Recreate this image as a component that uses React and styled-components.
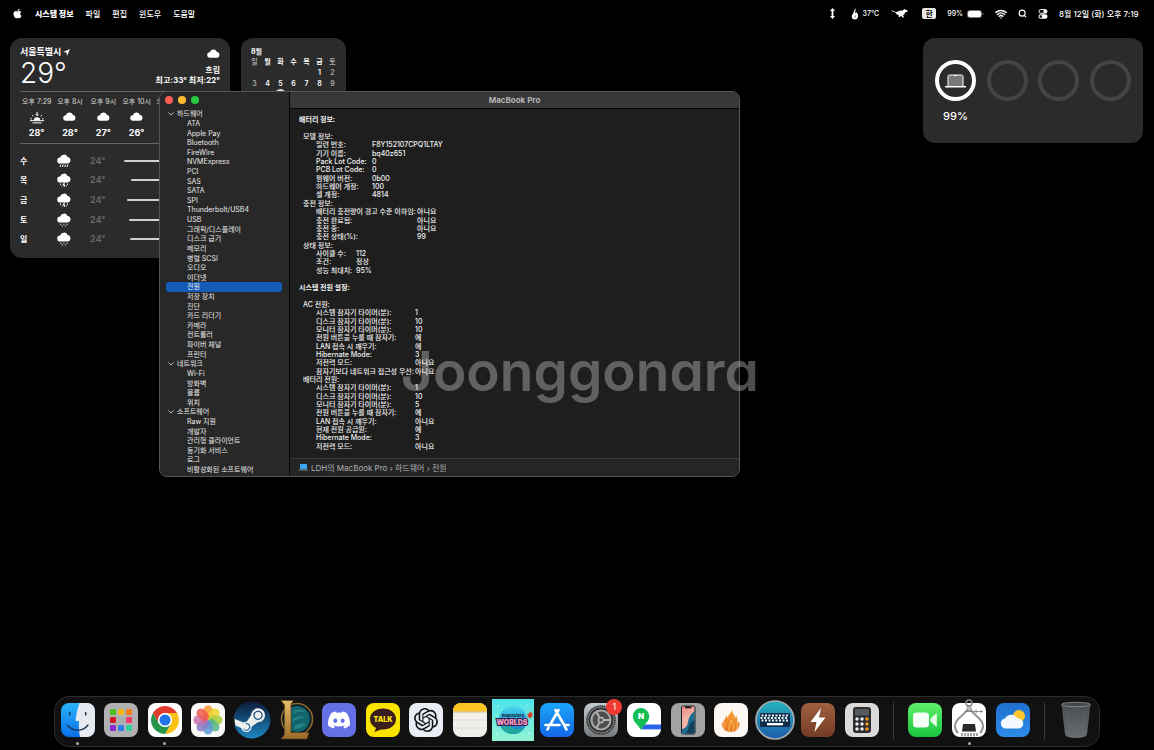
import React, { useState } from "react";
import styled, { createGlobalStyle } from "styled-components";
import { FaApple, FaDiscord, FaSteam } from "react-icons/fa";
import { SiOpenai } from "react-icons/si";
import { Search, Wifi } from "lucide-react";

const GlobalStyle = createGlobalStyle`
  * {
    box-sizing: border-box;
  }

  body {
    margin: 0;
    background: #000;
    color: #fff;
    font-family: Inter, "Noto Sans CJK KR", sans-serif;
    font-size: 8px;
    line-height: 10px;
  }

  button {
    font: inherit;
    color: inherit;
    background: none;
    border: 0;
    margin: 0;
    padding: 0;
    text-align: left;
    white-space: nowrap;
  }

  svg {
    display: block;
    flex: none;
  }
`;

const Desktop = styled.div`
  position: relative;
  min-height: 100vh;
  display: flex;
  flex-direction: column;
  overflow: hidden;
`;

/* menu bar */

const MenuBar = styled.header`
  height: 27px;
  padding: 0 11px 0 12px;
  display: flex;
  align-items: center;
  justify-content: space-between;
`;

const MenuGroup = styled.div`
  display: flex;
  align-items: center;
  gap: ${props => props.gap || "12px"};
  font-weight: 500;
`;

const MenuButton = styled.button`
  display: flex;
  align-items: center;
  gap: 4px;
  padding: ${props => props.padding || "0"};
  font-weight: ${props => (props.$bold ? 800 : 500)};
`;

const Reading = styled(MenuButton)`
  font-size: 7px;
`;

const Clock = styled(MenuButton)`
  min-width: 84px;
`;

const InputSource = styled.button`
  width: 14px;
  height: 11px;
  border-radius: 2px;
  background: #e8e8e8;
  color: #000;
  text-align: center;
  font-weight: 700;
`;

/* widgets */

const Widgets = styled.main`
  display: flex;
  align-items: flex-start;
  gap: 11px;
  padding: 11px 11px 0 10px;
`;

const Widget = styled.section`
  width: ${props => props.width};
  height: ${props => props.height};
  padding: ${props => props.padding};
  margin-left: ${props => props.$push || "0"};
  border-radius: 12px;
  background: #2b2b2b;
`;

const WeatherTop = styled.div`
  display: flex;
  justify-content: space-between;
  height: 45px;
`;

const City = styled.div`
  display: flex;
  align-items: center;
  gap: 2px;
  margin-top: 2px;
  font-size: 9px;
  line-height: 8px;
  font-weight: 700;
`;

const Degrees = styled.div`
  font-size: 28px;
  line-height: 34px;
  font-weight: 300;
`;

const Condition = styled.div`
  display: flex;
  flex-direction: column;
  align-items: flex-end;
  font-weight: 700;

  svg {
    margin: 2px 0 4px;
  }
`;

const Hours = styled.div`
  display: grid;
  grid-template-columns: repeat(6, 1fr);
  height: 53px;
  padding-top: 5px;
  border: solid #666;
  border-width: 1px 0;
`;

const Hour = styled.div`
  display: flex;
  flex-direction: column;
  align-items: center;
  gap: 4px;
  font-size: 7px;
  color: #ddd;
  white-space: nowrap;

  strong {
    font-size: 9px;
    color: #fff;
  }
`;

const Days = styled.div`
  display: flex;
  flex-direction: column;
  height: 98px;
  margin-top: 7px;
`;

const Day = styled.div`
  flex: 1;
  display: grid;
  grid-template-columns: 37px 33px 34px 1fr;
  align-items: center;
  font-weight: 700;
`;

const Low = styled.span`
  font-size: 9px;
  font-weight: 600;
  color: #6b6b6b;
`;

const RangeBar = styled.span`
  height: 2px;
  border-radius: 1px;
  background: #d0d0d0;
`;

const MonthTable = styled.table`
  width: 100%;
  table-layout: fixed;
  border-collapse: collapse;
  font-size: 7px;
  line-height: 11px;
  text-align: center;

  caption {
    text-align: left;
    padding-left: 3px;
    line-height: 9px;
    font-weight: 700;
  }

  th,
  td {
    padding: 0;
    height: 11px;
    font-weight: 600;
  }

  th:first-child,
  th:last-child,
  td:first-child,
  td:last-child {
    color: #aaa;
  }
`;

const Today = styled.span`
  display: block;
  width: 11px;
  margin: 0 auto;
  border-radius: 50%;
  background: #ddd;
  color: #2b2b2b;
`;

const Rings = styled.div`
  display: flex;
  justify-content: space-between;
`;

const Ring = styled.div`
  width: 41px;
  height: 41px;
  display: flex;
  align-items: center;
  justify-content: center;
  border: 4px solid ${props => (props.$active ? "#fff" : "#444")};
  border-radius: 50%;
`;

const Charge = styled.div`
  width: 41px;
  margin-top: 7px;
  text-align: center;
  font-size: 11px;
  line-height: 16px;
  font-weight: 500;
`;

/* system report window, placed freely on the desktop */

const Window = styled.section`
  position: absolute;
  left: 159px;
  top: 91px;
  width: 581px;
  height: 386px;
  display: flex;
  border: 1px solid #555;
  border-radius: 8px;
  background: #1e1e1e;
  overflow: hidden;
`;

const Sidebar = styled.nav`
  width: 130px;
  padding: 4px 7px 0 6px;
  background: #282828;
  border-right: 1px solid #060606;
  overflow: hidden;
`;

const Lights = styled.div`
  display: flex;
  gap: 5px;
  padding: 0 0 5px;
  margin-left: -1px;
`;

const Light = styled.button`
  width: 8px;
  height: 8px;
  border-radius: 50%;
  background: ${props => props.color};
`;

const Tree = styled.div`
  display: grid;
  grid-template-rows: repeat(39, 1fr);
  height: 375px;
`;

const TreeItem = styled.button`
  display: flex;
  align-items: center;
  gap: 3px;
  min-height: 0;
  padding-left: ${props => (props.$head ? "2px" : "21px")};
  border-radius: 3px;
  font-size: 7px;
  line-height: 9px;
  color: #e8e8e8;
  background: ${props => (props.$selected ? "#145cb8" : "none")};
`;

const Content = styled.div`
  flex: 1;
  display: flex;
  flex-direction: column;
`;

const TitleBar = styled.h1`
  flex: none;
  margin: 0;
  background: #373737;
  border-bottom: 1px solid #050505;
  color: #b5b5b5;
  text-align: center;
  font-size: 8px;
  line-height: 16px;
  font-weight: 700;
`;

const Report = styled.div`
  flex: 1;
  min-height: 0;
  overflow: hidden;
  padding: 6px 9px 0;
  font-size: 7px;
  line-height: 8px;
  font-weight: 500;
  color: #f2f2f2;
`;

const ReportTitle = styled.h2`
  margin: 0 0 9px;
  font-size: 7px;
  line-height: 9px;
  font-weight: 700;
`;

const ReportBody = styled.div`
  display: flex;
  flex-direction: column;
  height: ${props => props.height};
  margin-bottom: 8px;
  padding-left: 4px;
`;

const Group = styled.dl`
  flex: ${props => props.$rows} 1 0;
  display: grid;
  grid-template-columns: 13px ${props => props.$keys} 1fr;
  grid-template-rows: repeat(${props => props.$rows}, 1fr);
  min-height: 0;
  margin: 0;
  white-space: nowrap;
`;

const GroupName = styled.dt`
  grid-column: 1 / -1;
  min-height: 0;
`;

const Key = styled.dt`
  grid-column: 2;
  min-height: 0;
`;

const Value = styled.dd`
  margin: 0;
  min-height: 0;
`;

const PathBar = styled.footer`
  flex: none;
  height: 18px;
  display: flex;
  align-items: center;
  gap: 3px;
  padding-left: 9px;
  border-top: 1px solid #3a3a3a;
  background: #252525;
  color: #b0b0b0;
`;

const Watermark = styled.div`
  position: absolute;
  left: 401px;
  top: 336px;
  font-size: 55px;
  line-height: 70px;
  font-weight: 600;
  font-feature-settings: "cv11";
  color: rgba(255, 255, 255, 0.3);
  pointer-events: none;
`;

/* dock */

const DockBar = styled.footer`
  display: flex;
  height: 51px;
  margin: auto 54px 3px;
  padding: 2px 1px 0;
  border: 1px solid #2c2c2c;
  border-radius: 15px;
  background: #111;
`;

const DockItem = styled.button`
  position: relative;
  flex: 1;
  min-width: 0;
  display: flex;
  flex-direction: column;
  align-items: center;
`;

const Dot = styled.span`
  width: 3px;
  height: 3px;
  margin-top: 1px;
  border-radius: 50%;
  background: #aaa;
`;

const Divider = styled.span`
  width: 20px;
  display: flex;
  justify-content: center;

  &::before {
    content: "";
    width: 1px;
    height: 38px;
    margin-top: 3px;
    background: #3a3a3a;
  }
`;

const Badge = styled.span`
  position: absolute;
  right: 0;
  top: 0;
  width: 16px;
  height: 16px;
  border-radius: 50%;
  background: #f03b30;
  text-align: center;
  font-size: 9px;
  line-height: 16px;
`;

const CLOUD = "M3.4 9.5a3 3 0 0 1-.3-6A4 4 0 0 1 10.6 3a3.3 3.3 0 0 1 .3 6.5z";

const Cloud = ({ size = 13 }) => (
  <svg width={size} height={size} viewBox="0 0 14 12" fill="#fff">
    <path d={CLOUD} />
  </svg>
);

const Rain = ({ kind }) => (
  <svg width="14" height="14" viewBox="0 0 14 14" fill="#fff" stroke="#fff">
    <path d={CLOUD} stroke="none" />
    {kind === "rain" && <path d="M4 10.5 3 13M6.3 10.5l-1 2.5M8.600 10.5l-1 2.5M10.900 10.5l-1 2.5" />}
    {kind === "storm" && (
      <path d="M3.5 10.5v1.5M10.5 10.5v1.5M7.5 9.5 6 12h2l-1 2M5 12.5v1M9.5 12.5v1" strokeWidth=".9" />
    )}
    {kind === "drizzle" && (
      <path d="M3.7 10.7v1M6.900 10.7v1M10.100 10.7v1M5.3 12.5v1M8.5 12.5v1" strokeWidth="1.1" />
    )}
  </svg>
);

const Sunset = () => (
  <svg width="14" height="13" viewBox="0 0 14 13" fill="none" stroke="#fff">
    <path d="M3.8 9.5a3.2 3.2 0 0 1 6.4 0z" fill="#fff" stroke="none" />
    <path d="M0 9.7h14M2.5 11.900h9M7 1v3.5M5.5 3 7 4.5 8.5 3M2.2 4.2l1.2 1.2M11.8 4.2l-1.2 1.2M.5 7.8H2M12 7.8h1.5" />
  </svg>
);

const Chevron = () => (
  <svg width="6" height="4" viewBox="0 0 6 4" fill="none" stroke="#bbb">
    <path d="M.5.5 3 3.2 5.5.5" />
  </svg>
);

const Laptop = () => (
  <svg width="21" height="14" viewBox="0 0 21 14">
    <path d="M3 12V2.5Q3 1 4.5 1h12Q18 1 18 2.5V12" fill="#777" stroke="#fff" />
    <path d="M9 1h3v1H9zM0 12h21v1q0 .5-1 .5H1q-1 0-1-.5z" fill="#fff" />
  </svg>
);

const MenuBattery = () => (
  <svg width="17" height="8" viewBox="0 0 17 8">
    <rect x=".5" y=".5" width="14" height="7" rx="2" fill="none" stroke="#777" />
    <rect x="1" y="1" width="13" height="6" rx="1.5" fill="#fff" />
    <path d="M15.5 2.7q1 .3 1 1.3t-1 1.3z" fill="#888" />
  </svg>
);

const ControlCenter = () => (
  <svg width="10" height="10" viewBox="0 0 10 10">
    <rect x="1" y=".6" width="8" height="3.6" rx="1.8" fill="none" stroke="#fff" />
    <circle cx="7.2" cy="2.4" r="1.8" fill="#fff" />
    <rect x=".5" y="5.3" width="9" height="4.5" rx="2.2" fill="#fff" />
    <circle cx="2.8" cy="7.5" r="1.3" fill="#000" />
  </svg>
);

const Flame = () => (
  <svg width="8" height="12" viewBox="0 0 8 12">
    <path d="M4.5 0C5.300 2.500 3.700 3.500 4.200 5c.5.500 1-.2 1-1C6.700 5.500 7.500 7 7 9c-.4 1.700-1.700 2.500-3.200 2.500S.8 10.500.7 8.700C.6 6.700 2.300 6 2.700 4 3 2.500 4.200 2 4.500 0z" fill="#fff" />
    <path d="M4.200 7.500v2" stroke="#555" strokeWidth=".8" />
  </svg>
);

const RunningCat = () => (
  <svg width="17" height="11" viewBox="0 0 17 11">
    <path d="M.5 2.500Q3 2.300 4.500 4q2 0 4-1.200l3-.3L13.500 1l.8.8 1.900.2.3 1.800-2.500.8-.5 1.700-1.500 1 1 2-1.200.4-1.600-1.900L8.800 9l-1.300-.2.3-1.600-2.300-1L5 5Q3 3.400.5 3.300z" fill="#fff" />
  </svg>
);

const UpDown = () => (
  <svg width="5" height="11" viewBox="0 0 5 11">
    <path d="M2.5 0 5 3H3.400v5H5L2.5 11 0 8h1.600V3H0z" fill="#fff" />
  </svg>
);

/* dock artwork, every tile sits in a 42 unit box */

const Art = ({ children, tile }) => (
  <svg width="42" height="42" viewBox="0 0 42 42">
    {tile && <rect x="4" y="4" width="34" height="34" rx="8" fill={tile} />}
    {children}
  </svg>
);

const Gradient = ({ id, from, to }) => (
  <linearGradient id={id} x1="0" y1="0" x2="0" y2="1">
    <stop stopColor={from} />
    <stop offset="1" stopColor={to} />
  </linearGradient>
);

const Finder = () => (
  <Art tile="url(#finder)">
    <Gradient id="finder" from="#29b4fb" to="#0a6fe8" />
    <path d="M22.5 4C20 11 19 17 18.6 22H22c-.4 6 0 11 1 16h7a8 8 0 0 0 8-8V12a8 8 0 0 0-8-8z" fill="#e6eaf0" />
    <path d="M12.7 13.5v2.500M28.7 13.5v2.500" stroke="#12304e" strokeWidth="1.4" strokeLinecap="round" />
    <path d="M10.5 26.5q4.5 4.7 10.5 4.7T31 26" fill="none" stroke="#17324d" strokeWidth="1.3" strokeLinecap="round" />
  </Art>
);

const PAD_COLORS = ["#4fc11c", "#f8b90f", "#f4801b", "#d01c28", "#a9adb0", "#f03a68", "#8a2bd0", "#2a80ea", "#2fd39a"];

const Launchpad = () => (
  <Art tile="#b1b1b3">
    {PAD_COLORS.map((color, i) => (
      <rect key={color} x={10 + (i % 3) * 8} y={10 + Math.floor(i / 3) * 8} width="6" height="6" rx="1.2" fill={color} />
    ))}
  </Art>
);

const Chrome = () => (
  <Art tile="#fff">
    <path d="M8.88 14a14 14 0 0 1 24.24 0H21a7 7 0 0 0-6.06 10.5z" fill="#e23b2e" />
    <path d="M33.12 14A14 14 0 0 1 21 35l6.06-10.5A7 7 0 0 0 21 14z" fill="#fbc116" />
    <path d="M21 35A14 14 0 0 1 8.88 14l6.06 10.5a7 7 0 0 0 12.12 0z" fill="#27964a" />
    <circle cx="21" cy="21" r="7" fill="#fff" />
    <circle cx="21" cy="21" r="5.5" fill="#1f74e8" />
  </Art>
);

const PETALS = ["#f7962a", "#f2d32c", "#a6cc3d", "#58b582", "#5b98d6", "#8b78c4", "#c76fb0", "#ee5a4d"];

const Photos = () => (
  <Art tile="#fafafa">
    {PETALS.map((color, i) => (
      <rect key={color} x="16.500" y="6.500" width="9" height="14" rx="4.500" fill={color} opacity=".85" transform={`rotate(${i * 45} 21 21)`} />
    ))}
  </Art>
);

const Steam = () => (
  <Art>
    <Gradient id="steam" from="#0d1c3a" to="#1c86c2" />
    <circle cx="21" cy="21" r="17.5" fill="#eee" />
    <FaSteam x="2" y="2" size="38" fill="url(#steam)" />
  </Art>
);

const League = () => (
  <Art>
    <Gradient id="lol" from="#e3bd68" to="#9c6a2b" />
    <circle cx="22" cy="20" r="15.5" fill="#0a1d24" stroke="#8f6a30" strokeWidth="1.6" />
    <circle cx="22" cy="20" r="13" fill="#14646c" />
    <path d="M18 13q7-6 13 1-7-3-13 1zM18 20q7-5 14-1-7-1-14 4zM19 27q7-4 12-2-4 4-11 5z" fill="#2c9b9a" opacity=".6" />
    <path d="M6 1.500h12.500L16 5v28.500h18L32 40H6l3.500-4.500V6z" fill="url(#lol)" stroke="#5b3d17" strokeWidth=".6" />
  </Art>
);

const Discord = () => (
  <Art tile="#6570e6">
    <FaDiscord x="9" y="9" size="24" color="#fff" />
  </Art>
);

const KakaoTalk = () => (
  <Art tile="#fbe300">
    <path d="M21 9.5c7.5 0 13 4.5 13 10.5s-5.5 10.5-13 10.5h-2L12.5 33l1.5-4c-4-2-6-5-6-9 0-6 5.5-10.5 13-10.5z" fill="#3a1d1f" />
    <text x="21" y="23" textAnchor="middle" fontSize="7" fontWeight="900" fill="#fbe300">TALK</text>
  </Art>
);

const ChatGpt = () => (
  <Art tile="#e9eef6">
    <SiOpenai x="9" y="9" size="24" color="#151515" />
  </Art>
);

const Notes = () => (
  <Art tile="#f0efea">
    <path d="M4 12.5V12a8 8 0 0 1 8-8h18a8 8 0 0 1 8 8v.5z" fill="#fcc521" />
    <path d="M4 13h34" stroke="#b9a36c" strokeWidth=".7" />
    <path d="M4 21h34M4 29h34" stroke="#d6d5d0" strokeWidth=".7" />
  </Art>
);

const Worlds = () => (
  <Art>
    <Gradient id="sky" from="#4de3ea" to="#91f3d3" />
    <Gradient id="planet" from="#47d9ef" to="#1673c6" />
    <path d="M0 0h42v42H0z" fill="url(#sky)" />
    <circle cx="21" cy="21" r="14" fill="url(#planet)" />
    <path d="M9 28q7-2 12 1t12-1q-4 7-12 7T9 28z" fill="#22a79c" />
    <g fill="#fff">
      <circle cx="6" cy="7" r=".7" />
      <circle cx="35" cy="6" r=".6" />
      <circle cx="37" cy="34" r=".7" />
      <circle cx="5" cy="35" r=".7" />
    </g>
    <text x="21" y="17.5" textAnchor="middle" fontSize="4" fontWeight="800" fill="#13283f">maplestory</text>
    <text x="20" y="26" textAnchor="middle" fontSize="7" fontWeight="900" stroke="#2a2148" strokeWidth="2" paintOrder="stroke" fill="#f79ac4">WORLDS</text>
    <path d="m38 12 1 2 2-.5-1 2 1 2-2 .5-1 2-1-2-2 .5 1-2-1-1.5 2-.5z" fill="#e03b24" />
  </Art>
);

const AppStore = () => (
  <Art tile="url(#store)">
    <Gradient id="store" from="#1aa5f8" to="#1467e8" />
    <path d="m22.5 11-8.5 15M19.5 11l9.5 16.5M9.5 26h14M29 26h3.5M12.5 28.5 11.5 30.5M29 28l1.5 2.5" fill="none" stroke="#fff" strokeWidth="2.6" strokeLinecap="round" />
  </Art>
);

const Settings = () => (
  <Art tile="url(#metal)">
    <Gradient id="metal" from="#c3ccd0" to="#77797b" />
    <circle cx="21" cy="21" r="14" fill="#8e9193" stroke="#292929" strokeWidth="1.6" strokeDasharray="1.3 .6" />
    <circle cx="21" cy="21" r="12.5" fill="#2e2e2f" />
    <circle cx="21" cy="21" r="9.5" fill="#4a4c4e" stroke="#a5a5a5" strokeWidth="2.2" />
    <path d="M21 21h9.500M21 21l-4.700-8.300M21 21l-4.700 8.300" stroke="#b0b0b0" strokeWidth="2" />
    <circle cx="21" cy="21" r="2.6" fill="#555" stroke="#b5b5b5" strokeWidth="1.5" />
  </Art>
);

const NaverMap = () => (
  <Art tile="#fff">
    <path d="M17 25.500h21V31H20z" fill="#2a62ee" />
    <path d="M20 30.500h18" stroke="#a9c6ff" />
    <path d="M18 9a8.2 8.2 0 0 1 8.2 8.2c0 6-5.7 8.3-8.2 14-2.5-5.7-8.2-8-8.2-14A8.2 8.2 0 0 1 18 9z" fill="#13be55" />
    <text x="18" y="19.5" textAnchor="middle" fontSize="8" fontWeight="900" fill="#fff">N</text>
  </Art>
);

const PhoneMirroring = () => (
  <Art tile="#a3a3a3">
    <linearGradient id="screen" x1="0" y1="0" x2=".3" y2="1">
      <stop stopColor="#f3897f" />
      <stop offset=".5" stopColor="#f0b3a8" />
    </linearGradient>
    <rect x="14" y="6.5" width="14.5" height="29" rx="2.5" fill="#14222b" />
    <path d="M15 7.500h12.500v27H15z" fill="url(#screen)" />
    <path d="M27.500 12q-6 5-6.500 11t-6 7v4.500h12.500z" fill="#1b6c8e" />
    <path d="M27.500 21q-5 3-6 8t-4 5.500h10z" fill="#123f5c" />
    <rect x="18" y="7.5" width="6.5" height="1.8" rx=".9" fill="#111" />
  </Art>
);

const Hot = () => (
  <Art tile="#fdf8f3">
    <Gradient id="fire" from="#f8ab39" to="#e67621" />
    <path d="M22 8c1 5-4 7-4 11l-2-3c1 3-3 5-3 9l-1-2c-1 6 3 10 9 10s10-5 8-11l-2 3c1-4 0-7-1-9l-1 4c0-5-4-6-3-12z" fill="url(#fire)" />
    <path d="M20 33c-3-4 1-8 1-12 3 4 4 8 1 12M15 30c-2-2-1-5 0-6M26 31c2-3 1-5 1-6" fill="none" stroke="#ffd07a" strokeWidth=".8" />
  </Art>
);

const KEYS = [0, 1, 2, 3, 4, 5, 6, 7];

const Keyboard = () => (
  <Art>
    <Gradient id="key" from="#26b3bd" to="#1e5cab" />
    <circle cx="21" cy="21" r="19" fill="url(#key)" stroke="#a6abb0" strokeWidth="1.7" />
    <rect x="6" y="14" width="30" height="14" rx="1.5" fill="#102d49" />
    {KEYS.map(i => (
      <path key={i} d={`M${7.5 + i * 3.5} 15.5h2v2h-2zM${6.5 + i * 3.5} 18h2v2h-2zM${7.5 + i * 3.5} 20.5h2v2h-2z`} fill="#e9f3fa" />
    ))}
    <rect x="13" y="24" width="16" height="2.3" fill="#fff" />
  </Art>
);

const Bolt = () => (
  <Art tile="url(#brown)">
    <Gradient id="brown" from="#a0603f" to="#743c25" />
    <path d="M24 9 13.500 23h6L17.5 33 28.500 18.500H22z" fill="#fff" />
  </Art>
);

const Calculator = () => (
  <Art tile="#dcdad8">
    <rect x="12" y="8" width="18" height="26" rx="3" fill="#2b2d30" />
    <rect x="14" y="10" width="14" height="6.5" rx="1.3" fill="#565b60" />
    {[0, 1, 2].map(row =>
      [0, 1, 2].map(col => (
        <circle key={`${row}${col}`} cx={16 + col * 5} cy={20 + row * 5} r="1.7" fill={col === 2 ? "#f79a1d" : "#eee"} />
      ))
    )}
  </Art>
);

const FaceTime = () => (
  <Art tile="url(#green)">
    <Gradient id="green" from="#5ff06d" to="#18c43d" />
    <rect x="9" y="13.5" width="16" height="15" rx="3.5" fill="#f4fff5" />
    <path d="m26.5 19.5 5.5-5q.8-.6.8.5v12q0 1.1-.8.5l-5.5-5z" fill="#e3fce6" />
  </Art>
);

const SystemInfo = () => (
  <Art tile="#fff">
    <circle cx="21" cy="4" r="3" fill="none" stroke="#888" strokeWidth="1.5" />
    <path d="M19.5 7h3l1 5h-5z" fill="#b9bec2" stroke="#777" strokeWidth=".6" />
    <path d="M19 11c-3 6-12 8-12 16 0 3 1 5 3 7M23 11c3 6 12 8 12 16 0 3-1 5-3 7" fill="none" stroke="#8f9498" strokeWidth="2" />
    <path d="M17 12.5h18M28 10.5v4M33 11v3" stroke="#777" strokeWidth=".8" />
    <path d="M15 25h12l1 7.500H14z" fill="#28292b" />
    <path d="M14 34v3.500M17 34v3.500M20 34v3.500M23 34v3.500M26 34v3.500M29 34v3" stroke="#8a8a8a" strokeWidth="1.6" />
  </Art>
);

const Weather = () => (
  <Art tile="url(#blue)">
    <Gradient id="blue" from="#2070ce" to="#2b8ce9" />
    <circle cx="27" cy="17" r="6" fill="#fdc52b" />
    <path d="M13.5 29.5a5 5 0 0 1-.5-9.900 7 7 0 0 1 12.5 0 5 5 0 0 1 1.5 9.900z" fill="#f4f9ff" />
  </Art>
);

const Trash = () => (
  <Art>
    <Gradient id="bin" from="#505456" to="#74787b" />
    <path d="M6.5 5.5h29L32 35q-.5 4-11 4t-11-4z" fill="url(#bin)" opacity=".9" />
    <ellipse cx="21" cy="5.5" rx="14.5" ry="2.2" fill="#44484a" stroke="#92979a" strokeWidth=".8" />
    <path d="m12 10 3 26M30 10l-3 26" stroke="#858a8d" strokeWidth=".5" opacity=".4" />
  </Art>
);

const HOURS = [
  { time: "오후 7:29", temp: "28°", icon: <Sunset /> },
  { time: "오후 8시", temp: "28°", icon: <Cloud /> },
  { time: "오후 9시", temp: "27°", icon: <Cloud /> },
  { time: "오후 10시", temp: "26°", icon: <Cloud /> },
  { time: "오후 11시", temp: "26°", icon: <Cloud /> }
];

const DAYS = [
  { day: "수", kind: "rain", start: 0 },
  { day: "목", kind: "storm", start: 7 },
  { day: "금", kind: "storm", start: 3 },
  { day: "토", kind: "drizzle", start: 5 },
  { day: "일", kind: "drizzle", start: 6 }
];

const TREE = [
  {
    name: "하드웨어",
    items: [
      "ATA", "Apple Pay", "Bluetooth", "FireWire", "NVMExpress", "PCI", "SAS", "SATA", "SPI",
      "Thunderbolt/USB4", "USB", "그래픽/디스플레이", "디스크 굽기", "메모리", "병렬 SCSI", "오디오",
      "이더넷", "전원", "저장 장치", "진단", "카드 리더기", "카메라", "컨트롤러", "파이버 채널", "프린터"
    ]
  },
  { name: "네트워크", items: ["Wi-Fi", "방화벽", "볼륨", "위치"] },
  {
    name: "소프트웨어",
    items: [
      "Raw 지원", "개발자", "관리형 클라이언트", "동기화 서비스", "로그", "비활성화된 소프트웨어",
      "사용하지 않는 소프트웨어"
    ]
  }
];

const REPORT = [
  {
    title: "배터리 정보:",
    height: "142px",
    groups: [
      {
        name: "모델 정보:",
        keys: "56px",
        rows: [
          ["일련 번호:", "F8Y152107CPQ1LTAY"],
          ["기기 이름:", "bq40z651"],
          ["Pack Lot Code:", "0"],
          ["PCB Lot Code:", "0"],
          ["펌웨어 버전:", "0b00"],
          ["하드웨어 개정:", "100"],
          ["셀 개정:", "4814"]
        ]
      },
      {
        name: "충전 정보:",
        keys: "101px",
        rows: [
          ["배터리 충전량이 경고 수준 이하임:", "아니요"],
          ["충전 완료됨:", "아니요"],
          ["충전 중:", "아니요"],
          ["충전 상태(%):", "99"]
        ]
      },
      {
        name: "상태 정보:",
        keys: "40px",
        rows: [
          ["사이클 수:", "112"],
          ["조건:", "정상"],
          ["성능 최대치:", "95%"]
        ]
      }
    ]
  },
  {
    title: "시스템 전원 설정:",
    height: "150px",
    groups: [
      {
        name: "AC 전원:",
        keys: "99px",
        rows: [
          ["시스템 잠자기 타이머(분):", "1"],
          ["디스크 잠자기 타이머(분):", "10"],
          ["모니터 잠자기 타이머(분):", "10"],
          ["전원 버튼을 누를 때 잠자기:", "예"],
          ["LAN 접속 시 깨우기:", "예"],
          ["Hibernate Mode:", "3"],
          ["저전력 모드:", "아니요"],
          ["잠자기보다 네트워크 접근성 우선:", "아니요"]
        ]
      },
      {
        name: "배터리 전원:",
        keys: "99px",
        rows: [
          ["시스템 잠자기 타이머(분):", "1"],
          ["디스크 잠자기 타이머(분):", "10"],
          ["모니터 잠자기 타이머(분):", "5"],
          ["전원 버튼을 누를 때 잠자기:", "예"],
          ["LAN 접속 시 깨우기:", "아니요"],
          ["현재 전원 공급원:", "예"],
          ["Hibernate Mode:", "3"],
          ["저전력 모드:", "아니요"]
        ]
      }
    ]
  }
];

const APPS = [
  { name: "Finder", icon: <Finder />, open: true },
  { name: "Launchpad", icon: <Launchpad /> },
  { name: "Chrome", icon: <Chrome />, open: true },
  { name: "사진", icon: <Photos /> },
  { name: "Steam", icon: <Steam /> },
  { name: "League of Legends", icon: <League /> },
  { name: "Discord", icon: <Discord /> },
  { name: "카카오톡", icon: <KakaoTalk /> },
  { name: "ChatGPT", icon: <ChatGpt /> },
  { name: "메모", icon: <Notes /> },
  { name: "MapleStory Worlds", icon: <Worlds /> },
  { name: "App Store", icon: <AppStore /> },
  { name: "시스템 설정", icon: <Settings />, badge: 1 },
  { name: "네이버 지도", icon: <NaverMap /> },
  { name: "iPhone 미러링", icon: <PhoneMirroring /> },
  { name: "Hot", icon: <Hot /> },
  { name: "키보드", icon: <Keyboard /> },
  { name: "배터리", icon: <Bolt /> },
  { name: "계산기", icon: <Calculator /> },
  { divider: true, name: "recent" },
  { name: "FaceTime", icon: <FaceTime /> },
  { name: "시스템 정보", icon: <SystemInfo />, open: true },
  { name: "날씨", icon: <Weather /> },
  { divider: true, name: "bin" },
  { name: "휴지통", icon: <Trash /> }
];

// August starts on a Friday
const WEEKS = [0, 1, 2, 3, 4, 5].map(week =>
  [0, 1, 2, 3, 4, 5, 6].map(day => {
    const date = week * 7 + day - 4;
    return date > 0 && date < 32 ? date : "";
  })
);

const Menu = () => (
  <MenuBar>
    <MenuGroup>
      <MenuButton aria-label="Apple">
        <FaApple size="11" />
      </MenuButton>
      <MenuButton $bold>시스템 정보</MenuButton>
      <MenuButton>파일</MenuButton>
      <MenuButton>편집</MenuButton>
      <MenuButton>윈도우</MenuButton>
      <MenuButton>도움말</MenuButton>
    </MenuGroup>
    <MenuGroup gap="11px">
      <MenuButton aria-label="스크롤" padding="0 5px 0 0"><UpDown /></MenuButton>
      <Reading><Flame />37°C</Reading>
      <MenuButton aria-label="RunCat" padding="0 3px 0 1px"><RunningCat /></MenuButton>
      <InputSource>한</InputSource>
      <Reading>99%<MenuBattery /></Reading>
      <MenuButton aria-label="Wi-Fi"><Wifi size={12} strokeWidth={3} /></MenuButton>
      <MenuButton aria-label="검색"><Search size={9} strokeWidth={3} /></MenuButton>
      <MenuButton aria-label="제어 센터"><ControlCenter /></MenuButton>
      <Clock>8월 12일 (화) 오후 7:19</Clock>
    </MenuGroup>
  </MenuBar>
);

const WeatherWidget = () => (
  <Widget width="220px" height="220px" padding="8px 10px 10px">
    <WeatherTop>
      <div>
        <City>
          서울특별시
          <svg width="7" height="7" viewBox="0 0 7 7">
            <path d="M7 0 4 7 3.5 3.5 0 3z" fill="#fff" />
          </svg>
        </City>
        <Degrees>29°</Degrees>
      </div>
      <Condition>
        <Cloud />
        <span>흐림</span>
        <span>최고:33° 최저:22°</span>
      </Condition>
    </WeatherTop>
    <Hours>
      {HOURS.map(hour => (
        <Hour key={hour.time}>
          {hour.time}
          {hour.icon}
          <strong>{hour.temp}</strong>
        </Hour>
      ))}
    </Hours>
    <Days>
      {DAYS.map(item => (
        <Day key={item.day}>
          {item.day}
          <Rain kind={item.kind} />
          <Low>24°</Low>
          <RangeBar style={{ marginLeft: item.start }} />
        </Day>
      ))}
    </Days>
  </Widget>
);

const CalendarWidget = () => (
  <Widget width="105px" height="105px" padding="9px 7px">
    <MonthTable>
      <caption>8월</caption>
      <thead>
        <tr>
          {["일", "월", "화", "수", "목", "금", "토"].map(day => (
            <th key={day}>{day}</th>
          ))}
        </tr>
      </thead>
      <tbody>
        {WEEKS.map((week, i) => (
          <tr key={i}>
            {week.map((date, j) => (
              <td key={j}>{date === 12 ? <Today>12</Today> : date}</td>
            ))}
          </tr>
        ))}
      </tbody>
    </MonthTable>
  </Widget>
);

const BatteryWidget = () => (
  <Widget width="220px" height="105px" padding="22px 12px" $push="auto">
    <Rings>
      <Ring $active><Laptop /></Ring>
      <Ring />
      <Ring />
      <Ring />
    </Rings>
    <Charge>99%</Charge>
  </Widget>
);

const SystemReport = () => {
  const [selected, setSelected] = useState("전원");

  return (
    <Window>
      <Sidebar>
        <Lights>
          <Light color="#ff5f57" aria-label="닫기" />
          <Light color="#febc2e" aria-label="최소화" />
          <Light color="#28c840" aria-label="확대" />
        </Lights>
        <Tree>
          {TREE.map(section => (
            <React.Fragment key={section.name}>
              <TreeItem $head>
                <Chevron />
                {section.name}
              </TreeItem>
              {section.items.map(item => (
                <TreeItem key={item} $selected={item === selected} onClick={() => setSelected(item)}>
                  {item}
                </TreeItem>
              ))}
            </React.Fragment>
          ))}
        </Tree>
      </Sidebar>
      <Content>
        <TitleBar>MacBook Pro</TitleBar>
        <Report>
          {REPORT.map(part => (
            <section key={part.title}>
              <ReportTitle>{part.title}</ReportTitle>
              <ReportBody height={part.height}>
                {part.groups.map(group => (
                  <Group key={group.name} $rows={group.rows.length + 1} $keys={group.keys}>
                    <GroupName>{group.name}</GroupName>
                    {group.rows.map(([key, value]) => (
                      <React.Fragment key={key}>
                        <Key>{key}</Key>
                        <Value>{value}</Value>
                      </React.Fragment>
                    ))}
                  </Group>
                ))}
              </ReportBody>
            </section>
          ))}
        </Report>
        <PathBar>
          <svg width="9" height="7" viewBox="0 0 9 7">
            <path d="M1 0h7v5H1z" fill="#39a5ee" />
            <path d="M0 5.5h9v1H0z" fill="#7d99ae" />
          </svg>
          <span>LDH의 MacBook Pro › 하드웨어 › {selected}</span>
        </PathBar>
      </Content>
    </Window>
  );
};

const Dock = () => (
  <DockBar>
    {APPS.map(app =>
      app.divider ? (
        <Divider key={app.name} />
      ) : (
        <DockItem key={app.name} aria-label={app.name}>
          {app.icon}
          {app.open && <Dot />}
          {app.badge && <Badge>{app.badge}</Badge>}
        </DockItem>
      )
    )}
  </DockBar>
);

const App = () => (
  <Desktop>
    <GlobalStyle />
    <Menu />
    <Widgets>
      <WeatherWidget />
      <CalendarWidget />
      <BatteryWidget />
    </Widgets>
    <SystemReport />
    <Watermark>Joonggonara</Watermark>
    <Dock />
  </Desktop>
);

export default App;
